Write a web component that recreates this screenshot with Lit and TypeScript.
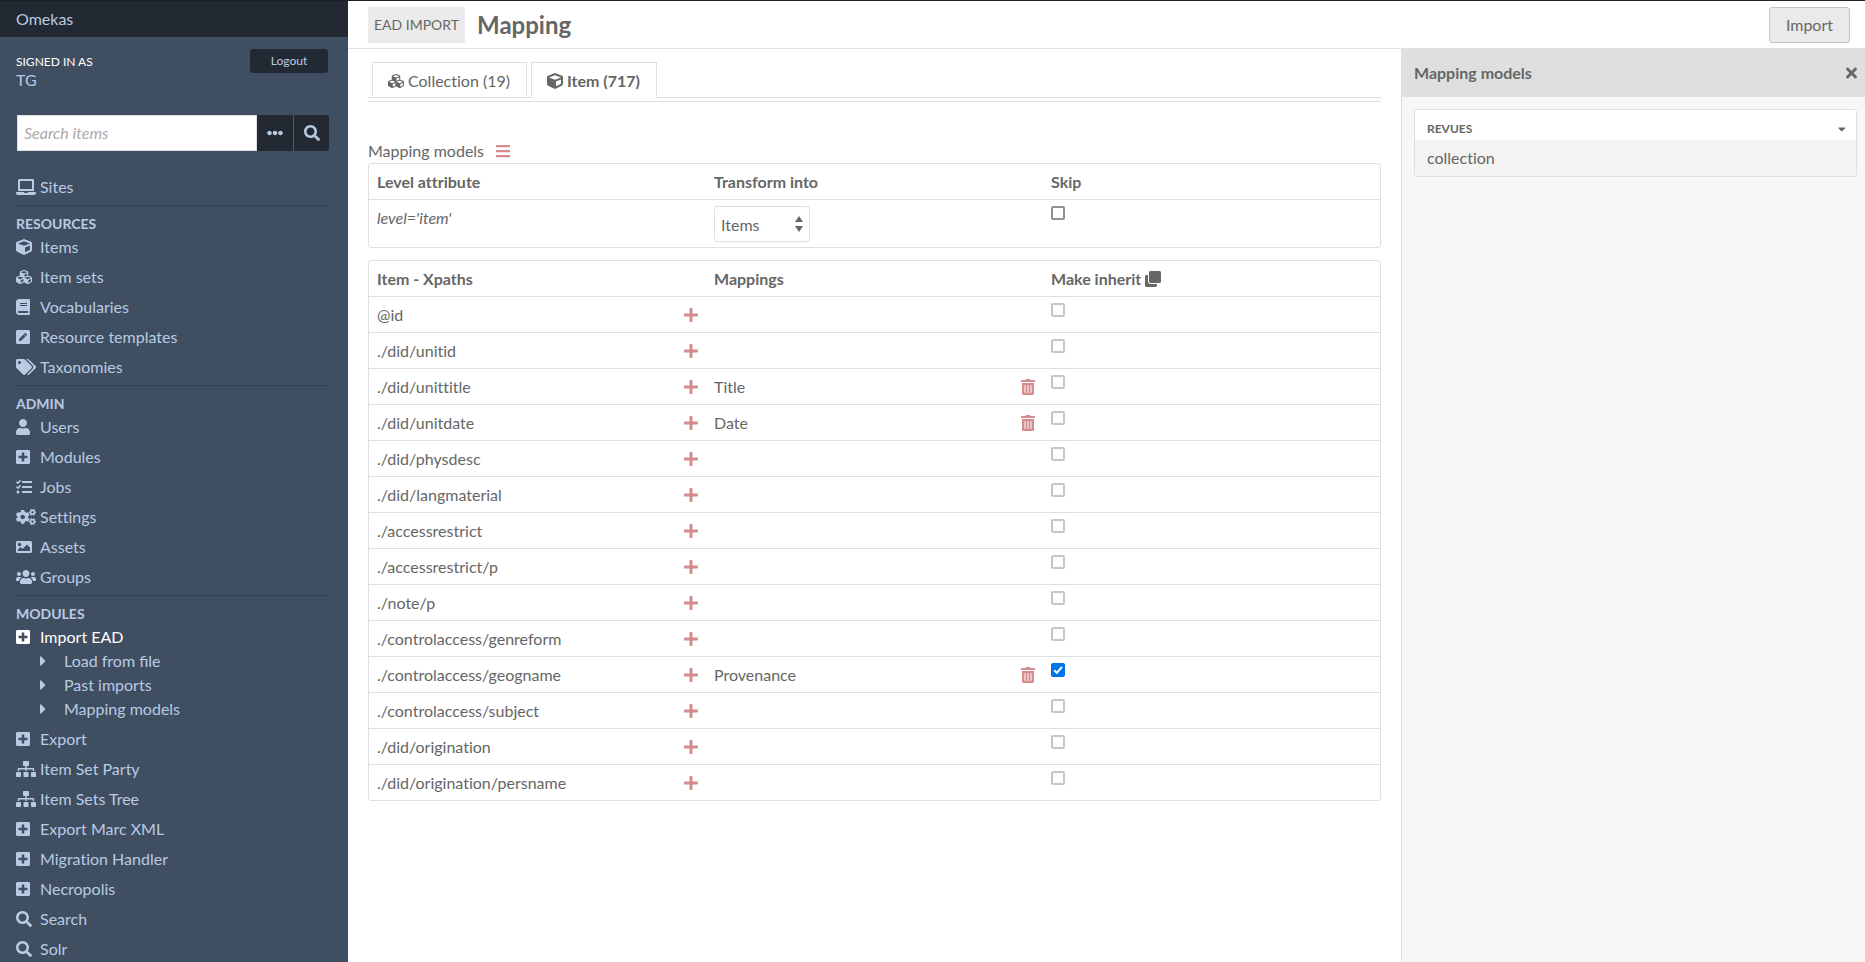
import { LitElement, html, css, svg, nothing } from "lit";
import { customElement, property, state } from "lit/decorators.js";
import { classMap } from "lit/directives/class-map.js";

/* name -> [viewBox width, path]; every glyph is 512 units tall */
const ICONS: Record<string, [number, string]> = {
  laptop: [640, "M624 416H381.54c-.74 19.81-14.71 32-32.74 32H288c-18.69 0-33.02-17.47-32.77-32H16c-8.8 0-16 7.2-16 16v16c0 35.2 28.8 64 64 64h512c35.2 0 64-28.8 64-64v-16c0-8.8-7.2-16-16-16zM576 48c0-26.4-21.6-48-48-48H112C85.6 0 64 21.6 64 48v336h512V48zm-64 272H128V64h384v256z"],
  cube: [512, "M239.1 6.3l-208 78c-18.7 7-31.1 25-31.1 45v225.1c0 18.2 10.3 34.8 26.5 42.9l208 104c13.5 6.8 29.4 6.8 42.9 0l208-104c16.3-8.1 26.5-24.8 26.5-42.9V129.3c0-20-12.4-37.9-31.1-44.9l-208-78C262 2.2 250 2.2 239.1 6.3zM256 68.4l192 72v1.1l-192 78-192-78v-1.1l192-72zm32 356V275.5l160-65v133.9l-160 80z"],
  cubes: [512, "M488.6 250.2L392 214V105.5c0-15-9.3-28.4-23.4-33.7l-100-37.5c-8.1-3.1-17.1-3.1-25.3 0l-100 37.5c-14.1 5.3-23.4 18.7-23.4 33.7V214l-96.6 36.2C9.3 255.5 0 268.9 0 283.9V394c0 13.6 7.7 26.1 19.9 32.2l100 50c10.1 5.1 22.1 5.1 32.2 0l103.9-52 103.9 52c10.1 5.1 22.1 5.1 32.2 0l100-50c12.2-6.1 19.9-18.6 19.9-32.2V283.9c0-15-9.3-28.4-23.4-33.7zM358 214.8l-85 31.9v-68.2l85-37v73.3zM154 104.1l102-38.2 102 38.2v.6l-102 41.4-102-41.4v-.6zm84 291.1l-85 42.5v-79.1l85-38.8v75.4zm0-112l-102 41.4-102-41.4v-.6l102-38.2 102 38.2v.6zm240 112l-85 42.5v-79.1l85-38.8v75.4zm0-112l-102 41.4-102-41.4v-.6l102-38.2 102 38.2v.6z"],
  book: [448, "M448 360V24c0-13.3-10.7-24-24-24H96C43 0 0 43 0 96v320c0 53 43 96 96 96h328c13.3 0 24-10.7 24-24v-16c0-7.5-3.5-14.3-8.9-18.7-4.2-15.4-4.2-59.3 0-74.7 5.4-4.3 8.9-11.1 8.9-18.6zM128 134c0-3.3 2.7-6 6-6h212c3.3 0 6 2.7 6 6v20c0 3.3-2.7 6-6 6H134c-3.3 0-6-2.7-6-6v-20zm0 64c0-3.3 2.7-6 6-6h212c3.3 0 6 2.7 6 6v20c0 3.3-2.7 6-6 6H134c-3.3 0-6-2.7-6-6v-20zm253.4 250H96c-17.7 0-32-14.3-32-32 0-17.6 14.4-32 32-32h285.4c-1.9 17.1-1.9 46.9 0 64z"],
  pen: [448, "M400 480H48c-26.5 0-48-21.5-48-48V80c0-26.5 21.5-48 48-48h352c26.5 0 48 21.5 48 48v352c0 26.5-21.5 48-48 48zM238.1 177.9L102.4 313.6l-6.3 57.1c-.8 7.6 5.6 14.1 13.3 13.3l57.1-6.3L302.2 242c2.3-2.3 2.3-6.1 0-8.5L246.7 178c-2.5-2.4-6.3-2.4-8.6-.1zM345 165.1L314.9 135c-9.4-9.4-24.6-9.4-33.9 0l-23.1 23.1c-2.3 2.3-2.3 6.1 0 8.5l55.5 55.5c2.3 2.3 6.1 2.3 8.5 0L345 199c9.3-9.3 9.3-24.5 0-33.9z"],
  tags: [640, "M497.941 225.941L286.059 14.059A48 48 0 0 0 252.118 0H48C21.49 0 0 21.49 0 48v204.118a48 48 0 0 0 14.059 33.941l211.882 211.882c18.744 18.745 49.136 18.746 67.882 0l204.118-204.118c18.745-18.745 18.745-49.137 0-67.882zM112 160c-26.51 0-48-21.49-48-48s21.49-48 48-48 48 21.49 48 48-21.49 48-48 48zm513.941 133.823L421.823 497.941c-18.745 18.745-49.137 18.745-67.882 0l-.36-.36L527.64 323.522c16.999-16.999 26.36-39.6 26.36-63.64s-9.362-46.641-26.36-63.64L331.397 0h48.721a48 48 0 0 1 33.941 14.059l211.882 211.882c18.745 18.745 18.745 49.137 0 67.882z"],
  user: [448, "M224 256c70.7 0 128-57.3 128-128S294.7 0 224 0 96 57.3 96 128s57.3 128 128 128zm89.6 32h-16.7c-22.2 10.2-46.9 16-72.9 16s-50.6-5.8-72.9-16h-16.7C60.2 288 0 348.2 0 422.4V464c0 26.5 21.5 48 48 48h352c26.5 0 48-21.5 48-48v-41.6c0-74.2-60.2-134.4-134.4-134.4z"],
  module: [448, "M400 32H48C21.5 32 0 53.5 0 80v352c0 26.5 21.5 48 48 48h352c26.5 0 48-21.5 48-48V80c0-26.5-21.5-48-48-48zm-32 252c0 6.6-5.4 12-12 12h-92v92c0 6.6-5.4 12-12 12h-56c-6.6 0-12-5.4-12-12v-92H92c-6.6 0-12-5.4-12-12v-56c0-6.6 5.4-12 12-12h92v-92c0-6.6 5.4-12 12-12h56c6.6 0 12 5.4 12 12v92h92c6.6 0 12 5.4 12 12v56z"],
  tasks: [512, "M139.61 35.5a12 12 0 0 0-17 0L58.93 98.81l-22.7-22.12a12 12 0 0 0-17 0L3.53 92.41a12 12 0 0 0 0 17l47.59 47.4a12.78 12.78 0 0 0 17.61 0l15.59-15.62L156.52 69a12.09 12.09 0 0 0 .09-17zm0 159.19a12 12 0 0 0-17 0l-63.68 63.72-22.7-22.1a12 12 0 0 0-17 0L3.53 252a12 12 0 0 0 0 17L51 316.5a12.77 12.77 0 0 0 17.6 0l15.7-15.69 72.2-72.22a12 12 0 0 0 .09-16.9zM64 368c-26.49 0-48.59 21.5-48.59 48S37.53 464 64 464a48 48 0 0 0 0-96zm432 16H208a16 16 0 0 0-16 16v32a16 16 0 0 0 16 16h288a16 16 0 0 0 16-16v-32a16 16 0 0 0-16-16zm0-320H208a16 16 0 0 0-16 16v32a16 16 0 0 0 16 16h288a16 16 0 0 0 16-16V80a16 16 0 0 0-16-16zm0 160H208a16 16 0 0 0-16 16v32a16 16 0 0 0 16 16h288a16 16 0 0 0 16-16v-32a16 16 0 0 0-16-16z"],
  cogs: [640, "M512.1 191l-8.2 14.3c-3 5.3-9.4 7.5-15.1 5.4-11.8-4.4-22.6-10.7-32.1-18.6-4.6-3.8-5.8-10.5-2.8-15.7l8.2-14.3c-6.9-8-12.3-17.3-15.9-27.4h-16.5c-6 0-11.2-4.3-12.2-10.3-2-12-2.1-24.6 0-37.1 1-6 6.2-10.4 12.2-10.4h16.5c3.6-10.1 9-19.4 15.9-27.4l-8.2-14.3c-3-5.2-1.9-11.9 2.8-15.7 9.5-7.9 20.4-14.2 32.1-18.6 5.7-2.1 12.1.1 15.1 5.4l8.2 14.3c10.5-1.9 21.2-1.9 31.7 0L552 6.3c3-5.3 9.4-7.5 15.1-5.4 11.8 4.4 22.6 10.7 32.1 18.6 4.6 3.8 5.8 10.5 2.8 15.7l-8.2 14.3c6.9 8 12.3 17.3 15.9 27.4h16.5c6 0 11.2 4.3 12.2 10.3 2 12 2.1 24.6 0 37.1-1 6-6.2 10.4-12.2 10.4h-16.5c-3.6 10.1-9 19.4-15.9 27.4l8.2 14.3c3 5.2 1.9 11.9-2.8 15.7-9.5 7.9-20.4 14.2-32.1 18.6-5.7 2.1-12.1-.1-15.1-5.4l-8.2-14.3c-10.4 1.9-21.2 1.9-31.7 0zm-10.5-58.8c38.5 29.6 82.4-14.3 52.8-52.8-38.5-29.7-82.4 14.3-52.8 52.8zM386.3 286.1l33.7 16.8c10.1 5.8 14.5 18.1 10.5 29.1-8.9 24.2-26.4 46.4-42.6 65.8-7.4 8.9-20.2 11.1-30.3 5.3l-29.1-16.8c-16 13.7-34.6 24.6-54.9 31.7v33.6c0 11.6-8.3 21.6-19.7 23.6-24.6 4.2-50.4 4.4-75.9 0-11.5-2-20-11.9-20-23.6V418c-20.3-7.2-38.9-18-54.9-31.7L74 403c-10 5.8-22.9 3.6-30.3-5.3-16.2-19.4-33.3-41.6-42.2-65.7-4-10.9.4-23.2 10.5-29.1l33.3-16.8c-3.9-20.9-3.9-42.4 0-63.4L12 205.8c-10.1-5.8-14.6-18.1-10.5-29 8.9-24.2 26-46.4 42.2-65.8 7.4-8.9 20.2-11.1 30.3-5.3l29.1 16.8c16-13.7 34.6-24.6 54.9-31.7V57.1c0-11.5 8.2-21.5 19.6-23.5 24.6-4.2 50.5-4.4 76-.1 11.5 2 20 11.9 20 23.6v33.6c20.3 7.2 38.9 18 54.9 31.7l29.1-16.8c10-5.8 22.9-3.6 30.3 5.3 16.2 19.4 33.2 41.6 42.1 65.8 4 10.9.1 23.2-10 29.1l-33.7 16.8c3.9 21 3.9 42.5 0 63.5zm-117.6 21.1c59.2-77-28.7-164.9-105.7-105.7-59.2 77 28.7 164.9 105.7 105.7zm243.4 182.7l-8.2 14.3c-3 5.3-9.4 7.5-15.1 5.4-11.8-4.4-22.6-10.7-32.1-18.6-4.6-3.8-5.8-10.5-2.8-15.7l8.2-14.3c-6.9-8-12.3-17.3-15.9-27.4h-16.5c-6 0-11.2-4.3-12.2-10.3-2-12-2.1-24.6 0-37.1 1-6 6.2-10.4 12.2-10.4h16.5c3.6-10.1 9-19.4 15.9-27.4l-8.2-14.3c-3-5.2-1.9-11.9 2.8-15.7 9.5-7.9 20.4-14.2 32.1-18.6 5.7-2.1 12.1.1 15.1 5.4l8.2 14.3c10.5-1.9 21.2-1.9 31.7 0l8.2-14.3c3-5.3 9.4-7.5 15.1-5.4 11.8 4.4 22.6 10.7 32.1 18.6 4.6 3.8 5.8 10.5 2.8 15.7l-8.2 14.3c6.9 8 12.3 17.3 15.9 27.4h16.5c6 0 11.2 4.3 12.2 10.3 2 12 2.1 24.6 0 37.1-1 6-6.2 10.4-12.2 10.4h-16.5c-3.6 10.1-9 19.4-15.9 27.4l8.2 14.3c3 5.2 1.9 11.9-2.8 15.7-9.5 7.9-20.4 14.2-32.1 18.6-5.7 2.1-12.1-.1-15.1-5.4l-8.2-14.3c-10.4 1.9-21.2 1.9-31.7 0zM501.6 431c38.5 29.6 82.4-14.3 52.8-52.8-38.5-29.6-82.4 14.3-52.8 52.8z"],
  image: [512, "M464 448H48c-26.51 0-48-21.49-48-48V112c0-26.51 21.49-48 48-48h416c26.51 0 48 21.49 48 48v288c0 26.51-21.49 48-48 48zM112 120c-30.928 0-56 25.072-56 56s25.072 56 56 56 56-25.072 56-56-25.072-56-56-56zM64 384h384V272l-87.515-87.515c-4.686-4.686-12.284-4.686-16.971 0L208 320l-55.515-55.515c-4.686-4.686-12.284-4.686-16.971 0L64 336v48z"],
  users: [640, "M96 224c35.3 0 64-28.7 64-64s-28.7-64-64-64-64 28.7-64 64 28.7 64 64 64zm448 0c35.3 0 64-28.7 64-64s-28.7-64-64-64-64 28.7-64 64 28.7 64 64 64zm32 32h-64c-17.6 0-33.5 7.1-45.1 18.6 40.3 22.1 68.9 62 75.1 109.4h66c17.7 0 32-14.3 32-32v-32c0-35.3-28.7-64-64-64zm-256 0c61.9 0 112-50.1 112-112S381.9 32 320 32 208 82.1 208 144s50.1 112 112 112zm76.8 32h-8.3c-20.8 10-43.9 16-68.5 16s-47.6-6-68.5-16h-8.3C179.6 288 128 339.6 128 403.2V432c0 26.5 21.5 48 48 48h288c26.5 0 48-21.5 48-48v-28.8c0-63.6-51.6-115.2-115.2-115.2zm-223.7-13.4C161.5 263.1 145.6 256 128 256H64c-35.3 0-64 28.7-64 64v32c0 17.7 14.3 32 32 32h65.9c6.3-47.4 34.9-87.3 75.2-109.4z"],
  sitemap: [640, "M128 352H32c-17.67 0-32 14.33-32 32v96c0 17.67 14.33 32 32 32h96c17.67 0 32-14.33 32-32v-96c0-17.67-14.33-32-32-32zm-24-80h192v48h48v-48h192v48h48v-57.59c0-21.17-17.23-38.41-38.41-38.41H344v-64h40c17.67 0 32-14.33 32-32V32c0-17.67-14.33-32-32-32H256c-17.67 0-32 14.33-32 32v96c0 17.67 14.33 32 32 32h40v64H94.41C73.23 224 56 241.23 56 262.41V320h48v-48zm264 80h-96c-17.67 0-32 14.33-32 32v96c0 17.67 14.33 32 32 32h96c17.67 0 32-14.33 32-32v-96c0-17.67-14.33-32-32-32zm240 0h-96c-17.67 0-32 14.33-32 32v96c0 17.67 14.33 32 32 32h96c17.67 0 32-14.33 32-32v-96c0-17.67-14.33-32-32-32z"],
  search: [512, "M505 442.7L405.3 343c-4.5-4.5-10.6-7-17-7H372c27.6-35.3 44-79.7 44-128C416 93.1 322.9 0 208 0S0 93.1 0 208s93.1 208 208 208c48.3 0 92.7-16.4 128-44v16.3c0 6.4 2.5 12.5 7 17l99.7 99.7c9.4 9.4 24.6 9.4 33.9 0l28.3-28.3c9.4-9.4 9.4-24.6.1-34zM208 336c-70.7 0-128-57.2-128-128 0-70.7 57.2-128 128-128 70.7 0 128 57.2 128 128 0 70.7-57.2 128-128 128z"],
  caretRight: [192, "M0 384.662V127.338c0-17.818 21.543-26.741 34.142-14.142l128.662 128.662c7.81 7.81 7.81 20.474 0 28.284L34.142 398.804C21.543 411.404 0 402.48 0 384.662z"],
  caretDown: [320, "M31.3 192h257.3c17.8 0 26.7 21.5 14.1 34.1L174.1 354.8c-7.8 7.8-20.5 7.8-28.3 0L17.2 226.1C4.6 213.5 13.5 192 31.3 192z"],
  ellipsis: [512, "M328 256c0 39.8-32.2 72-72 72s-72-32.2-72-72 32.2-72 72-72 72 32.2 72 72zm104-72c-39.8 0-72 32.2-72 72s32.2 72 72 72 72-32.2 72-72-32.2-72-72-72zm-352 0c-39.8 0-72 32.2-72 72s32.2 72 72 72 72-32.2 72-72-32.2-72-72-72z"],
  bars: [448, "M16 132h416c8.837 0 16-7.163 16-16V76c0-8.837-7.163-16-16-16H16C7.163 60 0 67.163 0 76v40c0 8.837 7.163 16 16 16zm0 160h416c8.837 0 16-7.163 16-16v-40c0-8.837-7.163-16-16-16H16c-8.837 0-16 7.163-16 16v40c0 8.837 7.163 16 16 16zm0 160h416c8.837 0 16-7.163 16-16v-40c0-8.837-7.163-16-16-16H16c-8.837 0-16 7.163-16 16v40c0 8.837 7.163 16 16 16z"],
  plus: [448, "M416 208H272V64c0-17.67-14.33-32-32-32h-32c-17.67 0-32 14.33-32 32v144H32c-17.67 0-32 14.33-32 32v32c0 17.67 14.33 32 32 32h144v144c0 17.67 14.33 32 32 32h32c17.67 0 32-14.33 32-32V304h144c17.67 0 32-14.33 32-32v-32c0-17.67-14.33-32-32-32z"],
  trash: [448, "M32 464a48 48 0 0 0 48 48h288a48 48 0 0 0 48-48V128H32zm272-256a16 16 0 0 1 32 0v224a16 16 0 0 1-32 0zm-96 0a16 16 0 0 1 32 0v224a16 16 0 0 1-32 0zm-96 0a16 16 0 0 1 32 0v224a16 16 0 0 1-32 0zM432 32H312l-9.4-18.7A24 24 0 0 0 281.1 0H166.8a23.72 23.72 0 0 0-21.4 13.3L136 32H16A16 16 0 0 0 0 48v32a16 16 0 0 0 16 16h416a16 16 0 0 0 16-16V48a16 16 0 0 0-16-16z"],
  clone: [512, "M464 0c26.51 0 48 21.49 48 48v288c0 26.51-21.49 48-48 48H176c-26.51 0-48-21.49-48-48V48c0-26.51 21.49-48 48-48h288M176 416c-44.112 0-80-35.888-80-80V128H48c-26.51 0-48 21.49-48 48v288c0 26.51 21.49 48 48 48h288c26.51 0 48-21.49 48-48v-48H176z"],
  times: [352, "M242.72 256l100.07-100.07c12.28-12.28 12.28-32.19 0-44.48l-22.24-22.24c-12.28-12.28-32.19-12.28-44.48 0L176 189.28 75.93 89.21c-12.28-12.28-32.19-12.28-44.48 0L9.21 111.45c-12.28 12.28-12.28 32.19 0 44.48L109.28 256 9.21 356.07c-12.28 12.28-12.28 32.19 0 44.48l22.24 22.24c12.28 12.28 32.2 12.28 44.48 0L176 322.72l100.07 100.07c12.28 12.28 32.2 12.28 44.48 0l22.24-22.24c12.28-12.28 12.28-32.19 0-44.48L242.72 256z"],
};

const icon = (name: string, size = 16) => {
  const [w, d] = ICONS[name];
  return html`<svg class="icon" aria-hidden="true" viewBox="0 0 ${w} 512" width=${(size * w) / 512} height=${size}>
    ${svg`<path fill="currentColor" d=${d}></path>`}
  </svg>`;
};

const shared = css`
  * { box-sizing: border-box; }
  a { color: inherit; text-decoration: none; }
  ul { list-style: none; margin: 0; padding: 0; }
  button, input, select { font: inherit; font-variant-ligatures: none; color: inherit; margin: 0; }
  button { cursor: pointer; }
  .icon { display: block; flex: none; }
`;

interface NavItem { label: string; icon: string; active?: boolean; children?: string[]; }
interface NavGroup { title?: string; items: NavItem[]; }

const NAV: NavGroup[] = [
  { items: [{ label: "Sites", icon: "laptop" }] },
  {
    title: "Resources",
    items: [
      { label: "Items", icon: "cube" },
      { label: "Item sets", icon: "cubes" },
      { label: "Vocabularies", icon: "book" },
      { label: "Resource templates", icon: "pen" },
      { label: "Taxonomies", icon: "tags" },
    ],
  },
  {
    title: "Admin",
    items: [
      { label: "Users", icon: "user" },
      { label: "Modules", icon: "module" },
      { label: "Jobs", icon: "tasks" },
      { label: "Settings", icon: "cogs" },
      { label: "Assets", icon: "image" },
      { label: "Groups", icon: "users" },
    ],
  },
  {
    title: "Modules",
    items: [
      { label: "Import EAD", icon: "module", active: true, children: ["Load from file", "Past imports", "Mapping models"] },
      { label: "Export", icon: "module" },
      { label: "Item Set Party", icon: "sitemap" },
      { label: "Item Sets Tree", icon: "sitemap" },
      { label: "Export Marc XML", icon: "module" },
      { label: "Migration Handler", icon: "module" },
      { label: "Necropolis", icon: "module" },
      { label: "Search", icon: "search" },
      { label: "Solr", icon: "search" },
    ],
  },
];

@customElement("admin-sidebar")
export class AdminSidebar extends LitElement {
  static styles = [shared, css`
    :host {
      display: block;
      overflow-y: auto;
      scrollbar-width: none;
      background: #404e61;
      color: #b8cbe3;
    }
    .brand {
      display: block;
      padding: 6px 16px;
      background: #232932;
    }
    .user {
      display: flex;
      justify-content: space-between;
      align-items: flex-start;
      padding: 12px 20px 0 16px;
      height: 78px;
    }
    .signed {
      font-size: 12px;
      line-height: 18px;
      padding-top: 4px;
      color: #fff;
      text-transform: uppercase;
    }
    .name { display: block; line-height: 18px; }
    .logout {
      width: 78px;
      border-radius: 3px;
      background: #232932;
      font-size: 12px;
      line-height: 24px;
      text-align: center;
    }
    .search {
      display: flex;
      height: 36px;
      margin: 0 19px 21px 17px;
    }
    .query {
      flex: 1;
      min-width: 0;
      padding: 0 6px;
      border: 1px solid #dfdfdf;
      border-radius: 0;
      background: #fff;
      color: #676767;
      outline: 0;
    }
    .query::placeholder { color: #aaa; opacity: 1; font-style: italic; }
    .tool {
      display: flex;
      align-items: center;
      justify-content: center;
      width: 36px;
      padding: 0;
      border: 0;
      background: #232932;
    }
    .tool + .tool { border-left: 1px solid #56595f; border-radius: 0 3px 3px 0; }
    .group { margin: 0 19px 0 16px; padding-bottom: 3px; }
    .group + .group { border-top: 1px solid #354254; padding-top: 9px; }
    .title {
      margin: 0;
      font-size: 14px;
      line-height: 17px;
      font-weight: 700;
      text-transform: uppercase;
    }
    .entry { padding: 3px 0; }
    .link { display: flex; align-items: center; }
    .glyph { display: flex; width: 24px; flex: none; }
    .active > .link { color: #fff; }
    .children { padding-left: 24px; font-variant-ligatures: normal; }
  `];

  private entry(item: NavItem) {
    return html`<li class=${classMap({ entry: true, active: !!item.active })}>
      <a class="link" href="#"><span class="glyph">${icon(item.icon)}</span>${item.label}</a>
      ${item.children
        ? html`<ul class="children">
            ${item.children.map((c) => html`<li><a class="link" href="#"><span class="glyph">${icon("caretRight")}</span>${c}</a></li>`)}
          </ul>`
        : nothing}
    </li>`;
  }

  render() {
    return html`
      <a class="brand" href="#">Omekas</a>
      <div class="user">
        <div>
          <div class="signed">Signed in as</div>
          <a class="name" href="#">TG</a>
        </div>
        <a class="logout" href="#">Logout</a>
      </div>
      <form class="search" role="search" @submit=${(e: Event) => e.preventDefault()}>
        <input class="query" type="text" placeholder="Search items" aria-label="Search items" />
        <button class="tool" type="button" aria-label="Search options">${icon("ellipsis")}</button>
        <button class="tool" type="submit" aria-label="Search">${icon("search")}</button>
      </form>
      <nav>
        ${NAV.map((g) => html`<section class="group">
          ${g.title ? html`<h4 class="title">${g.title}</h4>` : nothing}
          <ul>${g.items.map((i) => this.entry(i))}</ul>
        </section>`)}
      </nav>
    `;
  }
}

interface XpathRow { xpath: string; mapping?: string; inherit?: boolean; }

@customElement("mapping-form")
export class MappingForm extends LitElement {
  @property({ attribute: false }) rows: XpathRow[] = [];

  static styles = [shared, css`
    :host { display: block; padding: 13px 20px 20px; }
    .tabs {
      padding-bottom: 3px;
      border-bottom: 1px solid #dfdfdf;
      margin-bottom: 37px;
    }
    .tablist {
      display: flex;
      gap: 4px;
      padding-left: 4px;
      border-bottom: 1px solid #dfdfdf;
    }
    .tab {
      display: flex;
      align-items: center;
      gap: 4px;
      padding: 5px 16px 4px 15px;
      border: 1px solid #dfdfdf;
      border-bottom: 0;
      line-height: 25px;
    }
    .current {
      margin-bottom: -1px;
      padding-bottom: 5px;
      background: #fff;
      font-weight: 700;
    }
    .models { display: flex; align-items: center; gap: 12px; }
    .action {
      display: flex;
      padding: 0;
      border: 0;
      background: none;
      color: #d48c8c;
    }
    .grid {
      width: 100%;
      table-layout: fixed;
      border: 1px solid #dfdfdf;
      border-radius: 3px;
      border-collapse: separate;
      border-spacing: 0;
    }
    .grid + .grid { margin-top: 12px; }
    .cell {
      padding: 6px 8px 5px;
      text-align: left;
      vertical-align: top;
      overflow-wrap: anywhere;
    }
    tr:not(:last-child) > .cell, thead .cell { border-bottom: 1px solid #dfdfdf; }
    .split { display: flex; align-items: center; justify-content: space-between; }
    .level { font-style: italic; }
    .heading { display: flex; align-items: center; gap: 4px; }
    .picker { position: relative; width: 96px; }
    .select {
      display: block;
      width: 100%;
      height: 36px;
      padding: 1px 24px 0 6px;
      appearance: none;
      border: 1px solid #dfdfdf;
      border-radius: 3px;
      background: #fff;
    }
    .arrows {
      position: absolute;
      right: 7px;
      top: 10px;
      pointer-events: none;
    }
    .check {
      display: block;
      width: 14px;
      height: 14px;
      appearance: none;
      border: 2px solid #c6c5cd;
      border-radius: 2px;
      background: #fff;
    }
    .dark { border-color: #8f8f9d; }
    .checkwrap { position: relative; width: 14px; }
    .check:checked { border-color: #0074e8; background: #0074e8; }
    .tick { position: absolute; left: 0; top: 0; display: none; pointer-events: none; }
    .check:checked + .tick { display: block; }
  `];

  private check(label: string, checked = false, dark = false) {
    return html`<div class="checkwrap">
      <input class=${classMap({ check: true, dark })} type="checkbox" aria-label=${label} .checked=${checked} />
      <svg class="tick" width="14" height="14" viewBox="0 0 14 14" aria-hidden="true">
        <path d="M3.2 7.2L5.8 9.8L11 3.8" fill="none" stroke="#fff" stroke-width="2" />
      </svg>
    </div>`;
  }

  render() {
    return html`
      <div class="tabs">
        <nav class="tablist">
          <a class="tab" href="#collection">${icon("cubes")}Collection (19)</a>
          <a class="tab current" href="#item" aria-current="page">${icon("cube")}Item (717)</a>
        </nav>
      </div>
      <div class="models">
        <span>Mapping models</span>
        <button class="action" type="button" aria-label="Choose a mapping model">${icon("bars")}</button>
      </div>
      <table class="grid">
        <thead>
          <tr><th class="cell">Level attribute</th><th class="cell">Transform into</th><th class="cell">Skip</th></tr>
        </thead>
        <tbody>
          <tr>
            <td class="cell level">level='item'</td>
            <td class="cell">
              <div class="picker">
                <select class="select" aria-label="Transform into">
                  <option selected>Items</option>
                  <option>Item sets</option>
                </select>
                <svg class="arrows" width="8" height="16" viewBox="0 0 8 16" aria-hidden="true">
                  <path fill="#666" d="M4 0L8 6H0zM4 16L0 10H8z" />
                </svg>
              </div>
            </td>
            <td class="cell">${this.check("Skip", false, true)}</td>
          </tr>
        </tbody>
      </table>
      <table class="grid">
        <thead>
          <tr>
            <th class="cell">Item - Xpaths</th>
            <th class="cell">Mappings</th>
            <th class="cell"><div class="heading">Make inherit${icon("clone")}</div></th>
          </tr>
        </thead>
        <tbody>
          ${this.rows.map((r) => html`<tr>
            <td class="cell">
              <div class="split">
                <span>${r.xpath}</span>
                <button class="action" type="button" aria-label="Add mapping for ${r.xpath}">${icon("plus")}</button>
              </div>
            </td>
            <td class="cell">
              ${r.mapping
                ? html`<div class="split">
                    <span>${r.mapping}</span>
                    <button class="action" type="button" aria-label="Remove ${r.mapping}">${icon("trash")}</button>
                  </div>`
                : nothing}
            </td>
            <td class="cell">${this.check(`Make ${r.xpath} inherit`, r.inherit)}</td>
          </tr>`)}
        </tbody>
      </table>
    `;
  }
}

@customElement("models-panel")
export class ModelsPanel extends LitElement {
  @state() private open = true;

  static styles = [shared, css`
    :host { display: block; background: #f7f7f7; border-left: 1px solid #dfdfdf; }
    .bar {
      display: flex;
      align-items: center;
      justify-content: space-between;
      padding: 12px 8px 12px 12px;
      background: #dfdfdf;
    }
    .title { margin: 0; font-size: 16px; font-weight: 700; }
    .plain { display: flex; padding: 0; border: 0; background: none; }
    .box {
      margin: 12px 8px 12px 12px;
      border: 1px solid #dfdfdf;
      border-radius: 3px;
      background: #fff;
    }
    .toggle {
      display: flex;
      align-items: center;
      justify-content: space-between;
      width: 100%;
      padding: 7px 11px 0 12px;
      border: 0;
      background: none;
      font-size: 12px;
      line-height: 23px;
      font-weight: 700;
      text-transform: uppercase;
    }
    .model { display: block; padding: 6px 12px; background: #f3f3f3; }
  `];

  render() {
    return html`
      <div class="bar">
        <h3 class="title">Mapping models</h3>
        <button class="plain" type="button" aria-label="Close">${icon("times")}</button>
      </div>
      <div class="box">
        <button class="toggle" type="button" aria-expanded=${this.open} @click=${() => (this.open = !this.open)}>
          Revues${icon("caretDown", 12)}
        </button>
        ${this.open ? html`<a class="model" href="#">collection</a>` : nothing}
      </div>
    `;
  }
}

@customElement("app-root")
export class AppRoot extends LitElement {
  private rows: XpathRow[] = [
    { xpath: "@id" },
    { xpath: "./did/unitid" },
    { xpath: "./did/unittitle", mapping: "Title" },
    { xpath: "./did/unitdate", mapping: "Date" },
    { xpath: "./did/physdesc" },
    { xpath: "./did/langmaterial" },
    { xpath: "./accessrestrict" },
    { xpath: "./accessrestrict/p" },
    { xpath: "./note/p" },
    { xpath: "./controlaccess/genreform" },
    { xpath: "./controlaccess/geogname", mapping: "Provenance", inherit: true },
    { xpath: "./controlaccess/subject" },
    { xpath: "./did/origination" },
    { xpath: "./did/origination/persname" },
  ];

  static styles = [shared, css`
    :host {
      display: grid;
      grid-template-columns: 348px minmax(0, 1fr);
      height: 100vh;
      border-top: 1px solid #1d1f27;
      box-sizing: border-box;
      background: #fff;
      color: #666;
      font: 16px/24px Lato, sans-serif;
      font-variant-ligatures: none;
    }
    .page { display: flex; flex-direction: column; min-height: 0; }
    .header {
      display: flex;
      align-items: center;
      gap: 12px;
      padding: 6px 15px 5px 20px;
      border-bottom: 1px solid #dfdfdf;
    }
    .crumb {
      padding: 0 6px;
      background: #ebebeb;
      font-size: 14px;
      line-height: 36px;
      text-transform: uppercase;
    }
    .title { margin: 0; font-size: 24px; line-height: 36px; font-weight: 700; }
    .import {
      height: 36px;
      margin-left: auto;
      padding: 0 16px;
      border: 1px solid #c4c4c4;
      border-radius: 3px;
      background: #eaeaea;
    }
    .body {
      flex: 1;
      min-height: 0;
      display: grid;
      grid-template-columns: minmax(0, 1fr) 464px;
    }
    .scroll { overflow-y: auto; }
  `];

  render() {
    return html`
      <admin-sidebar></admin-sidebar>
      <div class="page">
        <header class="header">
          <span class="crumb">EAD Import</span>
          <h1 class="title">Mapping</h1>
          <button class="import" type="button">Import</button>
        </header>
        <div class="body">
          <main class="scroll"><mapping-form .rows=${this.rows}></mapping-form></main>
          <models-panel></models-panel>
        </div>
      </div>
    `;
  }
}
